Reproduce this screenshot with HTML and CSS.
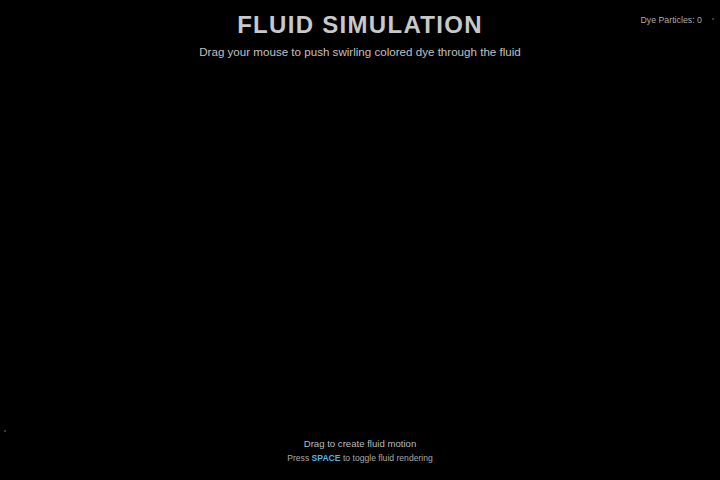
FILE: index.html
```html
<!DOCTYPE html>
<html>
<head>
<meta charset="utf-8">
<link rel="stylesheet" href="styles.css">
</head>
<body>
<div class="stage">
  <header class="header">
    <h1 class="title">FLUID SIMULATION</h1>
    <p class="subtitle">Drag your mouse to push swirling colored dye through the fluid</p>
  </header>
  <div class="stats">Dye Particles: 0</div>
  <span class="dot dot-a"></span>
  <span class="dot dot-b"></span>
  <footer class="footer">
    <div class="hint">Drag to create fluid motion</div>
    <div class="hint-small">Press <strong class="key">SPACE</strong> to toggle fluid rendering</div>
  </footer>
</div>
</body>
</html>
```
FILE: styles.css
```css
* { box-sizing: border-box; }
html, body { margin: 0; padding: 0; background: #000; }
body { font-family: "Liberation Sans", Arial, sans-serif; }
.stage {
  position: relative;
  width: 720px;
  height: 480px;
  display: flex;
  flex-direction: column;
  justify-content: space-between;
  align-items: center;
  background: #000;
  overflow: hidden;
}
.header { text-align: center; padding-top: 11px; }
.title {
  margin: 0;
  font-size: 24px;
  font-weight: bold;
  letter-spacing: 1.3px;
  color: #c8c8c8;
  line-height: 28px;
}
.subtitle {
  margin: 6px 0 0;
  font-size: 11.6px;
  color: #c0c0c0;
  line-height: 14px;
}
.stats {
  position: absolute;
  top: 14px;
  right: 18px;
  font-size: 8.8px;
  color: #aaa;
  line-height: 12px;
}
.dot {
  position: absolute;
  width: 2px;
  height: 2px;
  background: #3a3a3a;
}
.dot-a { left: 712px; top: 18px; }
.dot-b { left: 4px; top: 430px; }
.footer { text-align: center; padding-bottom: 15px; }
.hint { font-size: 9.6px; color: #bbb; line-height: 14px; }
.hint-small { font-size: 8.6px; color: #aaa; line-height: 14px; }
.key { color: #4fb3e8; font-weight: bold; }
```
